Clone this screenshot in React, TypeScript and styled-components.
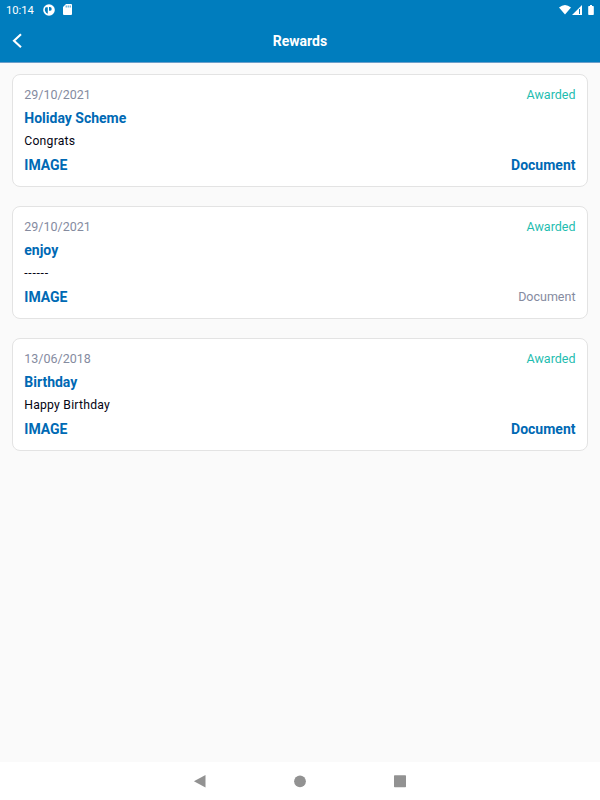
import React from "react";
import styled, { createGlobalStyle } from "styled-components";

const GlobalStyle = createGlobalStyle`
  * { box-sizing: border-box; }
  body { margin: 0; font-family: Roboto, "Liberation Sans", sans-serif; background: #fafafa; }
`;

const Screen = styled.div`
  display: flex;
  flex-direction: column;
  width: 600px;
  height: 800px;
  background: #fafafa;
`;

const StatusBar = styled.div`
  display: flex;
  align-items: center;
  height: 19px;
  padding: 0 5px 0 6px;
  background: #007dbe;
  color: #fff;
`;

const Clock = styled.span`
  font-size: 11.2px;
  line-height: 19px;
  width: 37px;
  padding-top: 1px;
`;

const StatusIcons = styled.div`
  display: flex;
  align-items: center;
  gap: 8px;
`;

const SystemIcons = styled(StatusIcons)`
  margin-left: auto;
`;

const AppBar = styled.header`
  display: grid;
  grid-template-columns: 40px 1fr 40px;
  align-items: center;
  height: 44px;
  border-bottom: 1px solid #6c9fca;
  background: #007dbe;
  color: #fff;
`;

const BackButton = styled.button`
  display: flex;
  align-items: center;
  border: 0;
  padding: 0 0 0 11px;
  background: none;
  color: inherit;
`;

const Title = styled.h1`
  margin: 0;
  text-align: center;
  font-size: 14px;
  font-weight: 700;
`;

const RewardList = styled.main`
  display: flex;
  flex-direction: column;
  flex: 1;
  gap: 19px;
  padding: 11px 12px 0;
`;

const Card = styled.article`
  height: 113px;
  padding: 8px 11.5px 6px 11.3px;
  border: 1px solid #e3e3e3;
  border-radius: 8px;
  background: #fff;
`;

const Row = styled.div`
  display: flex;
  align-items: center;
  justify-content: space-between;
  height: 23.4px;
`;

const Muted = styled.span`
  font-size: 12.5px;
  color: #858b9f;
`;

const Status = styled(Muted)`
  color: #1fbdb0;
`;

const Link = styled.span`
  font-size: 14px;
  font-weight: 700;
  color: #0069b4;
`;

const Message = styled.span<{ $spacing: number }>`
  font-size: 12.2px;
  letter-spacing: ${(p) => p.$spacing}px;
  color: #050514;
`;

const NavBar = styled.nav`
  display: flex;
  align-items: center;
  justify-content: center;
  gap: 86px;
  height: 38px;
  background: #fff;
`;

const rewards = [
  { date: "29/10/2021", name: "Holiday Scheme", message: "Congrats", spacing: 0.22, hasDocument: true },
  { date: "29/10/2021", name: "enjoy", message: "------", spacing: 0.7, hasDocument: false },
  { date: "13/06/2018", name: "Birthday", message: "Happy Birthday", spacing: 0.22, hasDocument: true },
];

export default function App() {
  return (
    <Screen>
      <GlobalStyle />
      <StatusBar>
        <Clock>10:14</Clock>
        <StatusIcons>
          <svg width="12" height="12" viewBox="0 0 12 12">
            <circle cx="6" cy="6" r="5.8" fill="#fff" />
            <path d="M2.6 3.2H4.8V9.8A4.4 4.4 0 0 1 2.6 3.2z M6 3h.8a1.9 1.9 0 0 1 0 3.8H6z" fill="#007dbe" />
          </svg>
          <svg width="9" height="11" viewBox="0 0 9 11">
            <path d="M3 0h5q1 0 1 1v9q0 1-1 1H1q-1 0-1-1V3z" fill="#fff" />
            <path d="M3.2 1.5v2M5.2 1.5v2M7.2 1.5v2" stroke="#007dbe" strokeWidth="0.8" />
          </svg>
        </StatusIcons>
        <SystemIcons>
          <svg width="36" height="12" viewBox="0 0 36 12">
            <path d="M0 3.5Q6-1.5 12 3.5L6 10.5z M23 1v10H13z M29.9 2h1.1V1h2v1h1.1q.7 0 .7.7v7.6q0 .7-.7.7h-4.2q-.7 0-.7-.7V2.7q0-.7.7-.7z" fill="#fff" />
            <path d="M20.5 5v5" stroke="#007dbe" strokeWidth="1" />
          </svg>
        </SystemIcons>
      </StatusBar>
      <AppBar>
        <BackButton aria-label="Back">
          <svg width="12" height="16" viewBox="0 0 12 16">
            <path d="M10 1.2L3 7.7l7 6.5" fill="none" stroke="#fff" strokeWidth="2.1" />
          </svg>
        </BackButton>
        <Title>Rewards</Title>
      </AppBar>
      <RewardList>
        {rewards.map((r) => (
          <Card key={r.name}>
            <Row><Muted>{r.date}</Muted><Status>Awarded</Status></Row>
            <Row><Link>{r.name}</Link></Row>
            <Row><Message $spacing={r.spacing}>{r.message}</Message></Row>
            <Row><Link>IMAGE</Link>{r.hasDocument ? <Link>Document</Link> : <Muted>Document</Muted>}</Row>
          </Card>
        ))}
      </RewardList>
      <NavBar>
        <svg width="14" height="14" viewBox="0 0 14 14"><path d="M12.5 1v12.4L.9 7.2z" fill="#929292" /></svg>
        <svg width="14" height="14" viewBox="0 0 14 14"><circle cx="7" cy="7.3" r="5.9" fill="#929292" /></svg>
        <svg width="14" height="14" viewBox="0 0 14 14"><rect x="1" y="1.3" width="12" height="12" rx=".7" fill="#929292" /></svg>
      </NavBar>
    </Screen>
  );
}
